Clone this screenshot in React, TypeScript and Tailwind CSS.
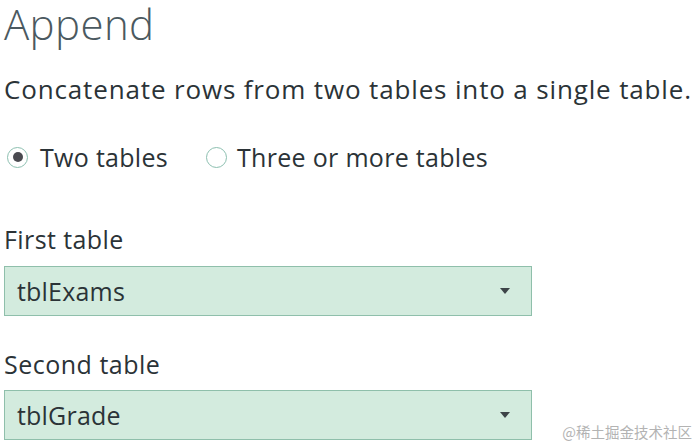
import React from "react";

function Radio({ checked }: { checked?: boolean }) {
  return (
    <span className="flex h-[21px] w-[21px] items-center justify-center rounded-full border-[1.5px] border-[#8cbfb0] bg-white">
      {checked && <span className="h-[10px] w-[10px] rounded-full bg-[#4a4a50]" />}
    </span>
  );
}

function Select({ value }: { value: string }) {
  return (
    <div className="flex h-[50px] w-[528px] items-center justify-between border border-[#8fbfab] bg-[#d3ebde] pl-[12px] pr-[21px]">
      <span className="text-[25px] leading-[32px] tracking-[0.2px] text-[#2b3337]">{value}</span>
      <svg width="10" height="6" viewBox="0 0 10 6">
        <path d="M0 0 H10 L5 6 Z" fill="#3d4448" />
      </svg>
    </div>
  );
}

export default function App() {
  return (
    <div className="relative h-[443px] w-[700px] overflow-hidden bg-white font-['Open_Sans',sans-serif] text-[#2b3337]">
      <div className="flex flex-col pl-[4px]">
        <h1 className="mt-[1px] text-[42px] font-light leading-[46px] tracking-[0.4px] text-[#4b5960]">Append</h1>
        <p className="mt-[25px] text-[26px] leading-[34px] tracking-[0.85px]">
          Concatenate rows from two tables into a single table.
        </p>
        <div className="mt-[35px] flex items-center pl-[3px] text-[25px] leading-[32px] tracking-[0.3px]">
          <Radio checked />
          <span className="ml-[12px]">Two tables</span>
          <span className="ml-[38px]">
            <Radio />
          </span>
          <span className="ml-[10px]">Three or more tables</span>
        </div>
        <div className="mt-[50px] text-[25px] leading-[32px] tracking-[0.4px]">First table</div>
        <div className="mt-[11px]">
          <Select value="tblExams" />
        </div>
        <div className="mt-[32px] text-[25px] leading-[32px] tracking-[0.5px]">Second table</div>
        <div className="mt-[10px]">
          <Select value="tblGrade" />
        </div>
      </div>
      <div className="absolute bottom-[1px] right-[8px] font-['Noto_Sans_CJK_SC',sans-serif] text-[14.5px] leading-[20px] text-[#b3b3b3]">
        @稀土掘金技术社区
      </div>
    </div>
  );
}
